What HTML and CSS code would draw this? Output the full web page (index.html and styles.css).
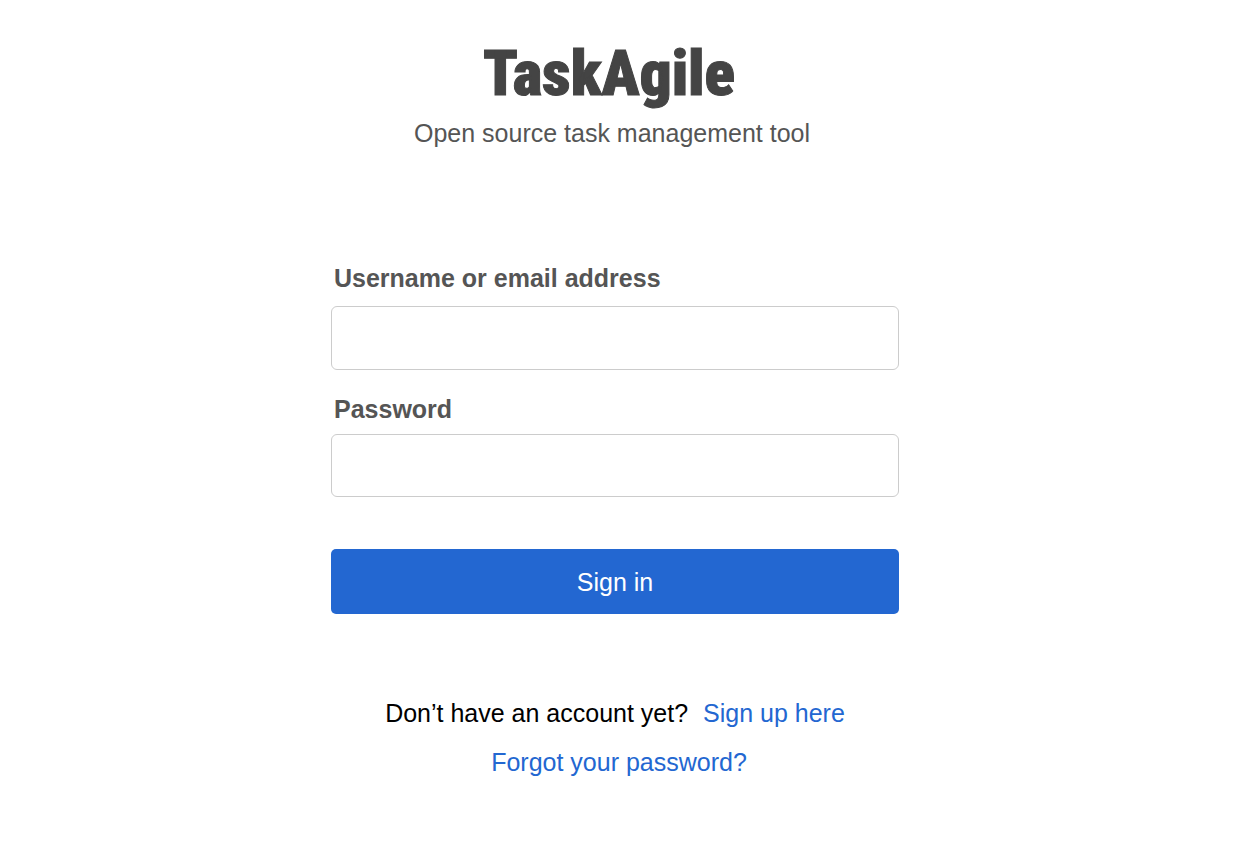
FILE: index.html
```html
<!DOCTYPE html>
<html lang="en">
<head>
<meta charset="utf-8">
<meta name="viewport" content="width=device-width, initial-scale=1">
<title>TaskAgile</title>
<link rel="stylesheet" href="styles.css">
</head>
<body>
<main class="page">
  <header class="brand">
    <h1 class="logo">TaskAgile</h1>
    <p class="tagline">Open source task management tool</p>
  </header>
  <form class="login">
    <div class="field">
      <label class="label" for="username">Username or email address</label>
      <input class="input" id="username" type="text">
    </div>
    <div class="field field-compact">
      <label class="label" for="password">Password</label>
      <input class="input" id="password" type="password">
    </div>
    <button class="submit" type="submit">Sign in</button>
  </form>
  <footer class="links">
    <p class="line">Don’t have an account yet? <a class="link signup" href="#">Sign up here</a></p>
    <p class="line forgot"><a class="link" href="#">Forgot your password?</a></p>
  </footer>
</main>
</body>
</html>
```

FILE: styles.css
```css
* { box-sizing: border-box; }
body {
  margin: 0;
  padding-right: 9px;
  background: #fff;
  color: #000;
  font: 25px/32px "Liberation Sans", Arial, sans-serif;
}
.page {
  width: 100%;
  max-width: 568px;
  margin: 0 auto;
  padding: 38px 0;
}
.brand { padding-right: 6px; text-align: center; }
.logo {
  margin: 0;
  padding-right: 6px;
  color: #444;
  font: 900 63px/72px "Roboto Condensed", Roboto, sans-serif;
  -webkit-text-stroke: 1px #444;
}
.tagline { margin: 7px 0 0; color: #555; }
.login {
  display: flex;
  flex-direction: column;
  margin-top: 113px;
}
.field {
  display: flex;
  flex-direction: column;
  gap: 12px;
  margin-bottom: 23px;
}
.field-compact { gap: 9px; }
.label {
  padding-left: 3px;
  color: #555;
  font-weight: bold;
}
.input {
  width: 100%;
  height: 64px;
  padding: 0 16px;
  border: 1px solid #ccc;
  border-radius: 6px;
  background: #fff;
  font: inherit;
}
.field-compact .input { height: 63px; }
.submit {
  height: 65px;
  margin-top: 29px;
  border: 0;
  border-radius: 5px;
  background: #2367d1;
  color: #fff;
  font: inherit;
}
.links { margin-top: 83px; text-align: center; }
.line { margin: 0 0 17px; }
.forgot { padding-left: 8px; }
.link { color: #2367d1; text-decoration: none; }
.signup { margin-left: 8px; }
```
